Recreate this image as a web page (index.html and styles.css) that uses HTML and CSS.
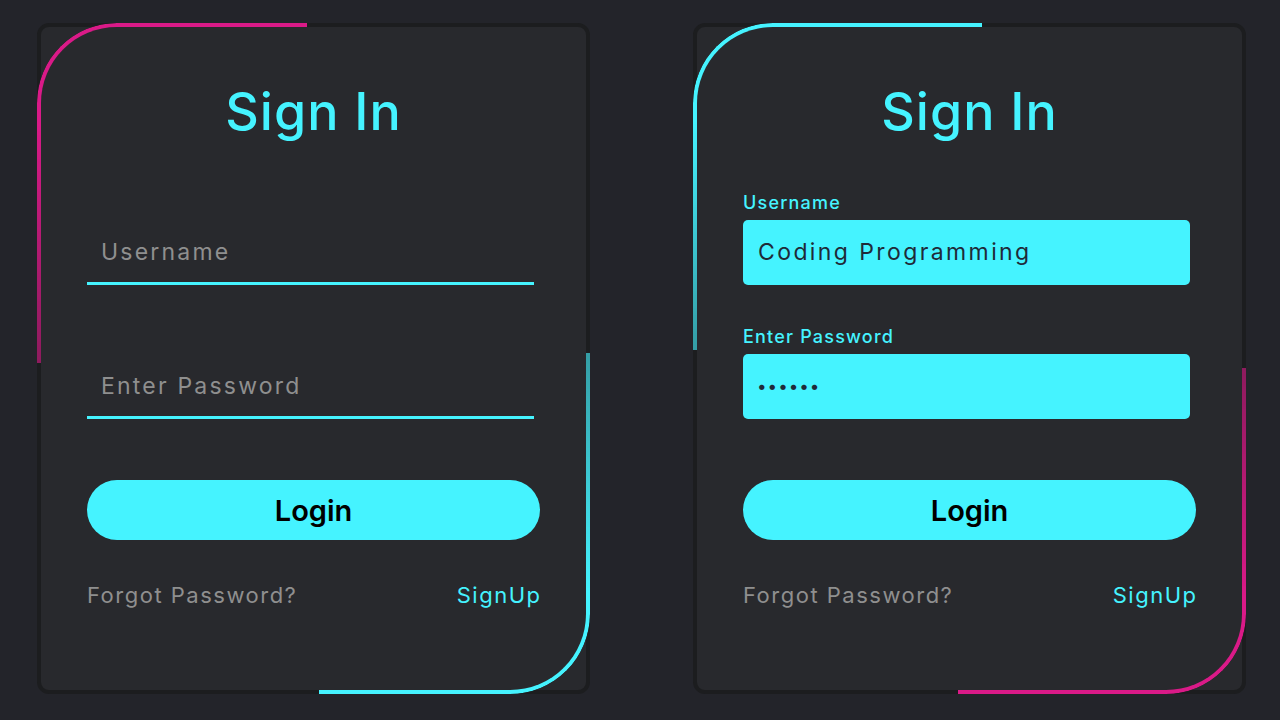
FILE: index.html
```html
<!DOCTYPE html>
<html lang="en">
<head>
<meta charset="utf-8">
<title>Sign In</title>
<link rel="stylesheet" href="styles.css">
</head>
<body>
<main class="page">
  <section class="card">
    <span class="deco deco-tl pink size-a"></span>
    <span class="deco deco-br cyan size-b"></span>
    <form class="card-body">
      <h2 class="title">Sign In</h2>
      <div class="field">
        <input class="line-input" type="text" placeholder="Username">
      </div>
      <div class="field">
        <input class="line-input" type="password" placeholder="Enter Password">
      </div>
      <button class="btn" type="button">Login</button>
      <div class="links">
        <a href="#" class="muted">Forgot Password?</a>
        <a href="#" class="accent">SignUp</a>
      </div>
    </form>
  </section>

  <section class="card">
    <span class="deco deco-tl cyan size-c"></span>
    <span class="deco deco-br pink size-d"></span>
    <form class="card-body">
      <h2 class="title">Sign In</h2>
      <div class="field">
        <label class="label">Username</label>
        <input class="box-input" type="text" value="Coding Programming">
      </div>
      <div class="field">
        <label class="label">Enter Password</label>
        <input class="box-input pw" type="password" value="123456">
      </div>
      <button class="btn" type="button">Login</button>
      <div class="links">
        <a href="#" class="muted">Forgot Password?</a>
        <a href="#" class="accent">SignUp</a>
      </div>
    </form>
  </section>
</main>
</body>
</html>
```
FILE: styles.css
```css
html, body {
  margin: 0;
  padding: 0;
}

body {
  background: #23242a;
  font-family: "Inter", "Open Sans", sans-serif;
}

.page {
  display: flex;
  gap: 103px;
  padding: 23px 0 0 37px;
  height: 720px;
  box-sizing: border-box;
}

.card {
  position: relative;
  width: 553px;
  height: 671px;
  box-sizing: border-box;
  border: 4px solid #1c1d1f;
  border-radius: 12px;
  background: #28292d;
}

.deco {
  position: absolute;
  box-sizing: border-box;
  pointer-events: none;
}

.deco-tl {
  top: -4px;
  left: -4px;
  border-top: 4px solid;
  border-left: 4px solid;
  border-top-left-radius: 80px;
  -webkit-mask-image: linear-gradient(to bottom, #000 30%, rgba(0, 0, 0, 0.6));
  mask-image: linear-gradient(to bottom, #000 30%, rgba(0, 0, 0, 0.6));
}

.deco-br {
  bottom: -4px;
  right: -4px;
  border-bottom: 4px solid;
  border-right: 4px solid;
  border-bottom-right-radius: 80px;
  -webkit-mask-image: linear-gradient(to top, #000 30%, rgba(0, 0, 0, 0.6));
  mask-image: linear-gradient(to top, #000 30%, rgba(0, 0, 0, 0.6));
}

.pink { border-color: #da1a88; }
.cyan { border-color: #45f3ff; }

.size-a { width: 270px; height: 340px; }
.size-b { width: 271px; height: 341px; }
.size-c { width: 289px; height: 327px; }
.size-d { width: 288px; height: 326px; }

.card-body {
  display: flex;
  flex-direction: column;
  padding: 0 46px;
}

.title {
  margin: 0;
  height: 124px;
  box-sizing: border-box;
  padding-top: 59px;
  text-align: center;
  color: #45f3ff;
  font-size: 52px;
  line-height: 52px;
  font-weight: 500;
  letter-spacing: 1px;
}

.field {
  height: 134px;
  display: flex;
  flex-direction: column;
  justify-content: flex-end;
}

.line-input {
  width: 447px;
  height: 53px;
  box-sizing: border-box;
  margin: 0;
  padding: 0 14px 11px;
  border: none;
  border-bottom: 3px solid #45f3ff;
  background: transparent;
  outline: none;
  font-family: inherit;
  font-size: 23px;
  letter-spacing: 2.2px;
  color: #23242a;
}

.line-input::placeholder {
  color: #8f8f8f;
}

.label {
  display: block;
  margin-bottom: 6px;
  color: #45f3ff;
  font-size: 18px;
  line-height: 22px;
  font-weight: 500;
  letter-spacing: 1.2px;
}

.box-input {
  width: 447px;
  height: 65px;
  box-sizing: border-box;
  margin: 0;
  padding: 0 15px 2px;
  border: none;
  border-radius: 5px;
  background: #45f3ff;
  outline: none;
  font-family: inherit;
  font-size: 23px;
  letter-spacing: 2.4px;
  color: #1f2a38;
}

.box-input.pw {
  font-size: 17px;
  letter-spacing: 1px;
  padding-left: 14px;
}

.btn {
  margin-top: 61px;
  width: 100%;
  height: 60px;
  border: none;
  border-radius: 30px;
  background: #45f3ff;
  color: #000;
  font-family: inherit;
  font-size: 29px;
  font-weight: 600;
  cursor: pointer;
}

.links {
  display: flex;
  justify-content: space-between;
  margin-top: 42px;
  font-size: 22px;
  line-height: 26px;
  letter-spacing: 1.5px;
}

.links a {
  text-decoration: none;
}

.muted { color: #8f8f8f; }
.accent { color: #45f3ff; margin-right: -1.5px; }
```
